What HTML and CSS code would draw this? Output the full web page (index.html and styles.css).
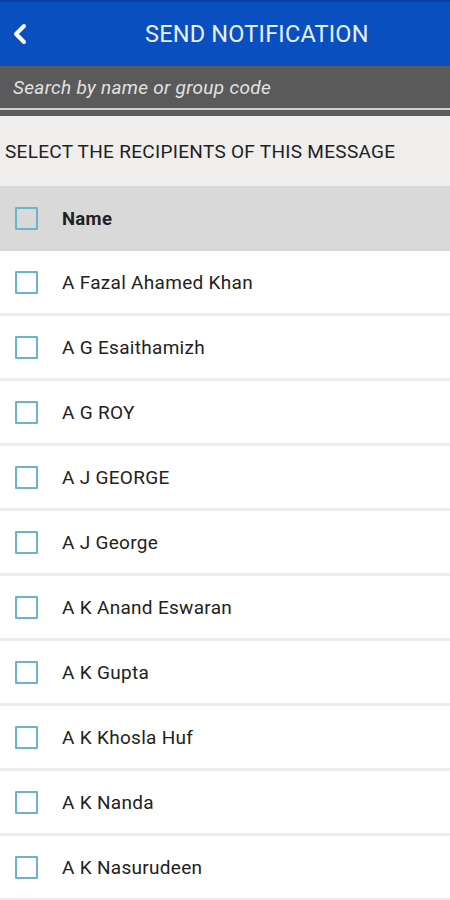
FILE: index.html
```html
<!DOCTYPE html>
<html lang="en">
<head>
    <meta charset="UTF-8">
    <meta name="viewport" content="width=device-width, initial-scale=1.0">
    <title>Send Notification</title>
    <link rel="stylesheet" href="styles.css">
</head>
<body>

    <!-- Top app bar -->
    <header class="topbar">
        <svg class="back" width="20" height="24" viewBox="0 0 20 24" aria-label="Back">
            <path d="M14 4 L6 12 L14 20" fill="none" stroke="#ffffff" stroke-width="4" stroke-linecap="round" stroke-linejoin="round"/>
        </svg>
        <h1>SEND NOTIFICATION</h1>
    </header>

    <!-- Search field -->
    <div class="search">
        <span class="placeholder">Search by name or group code</span>
    </div>
    <div class="search-edge"></div>

    <!-- Caption -->
    <div class="caption">SELECT THE RECIPIENTS OF THIS MESSAGE</div>

    <!-- Recipient list -->
    <div class="list-head">
        <span class="box"></span>
        <span class="head-label">Name</span>
    </div>
    <ul class="recipients">
        <li><span class="box"></span>A Fazal Ahamed Khan</li>
        <li><span class="box"></span>A G Esaithamizh</li>
        <li><span class="box"></span>A G ROY</li>
        <li><span class="box"></span>A J GEORGE</li>
        <li><span class="box"></span>A J George</li>
        <li><span class="box"></span>A K Anand Eswaran</li>
        <li><span class="box"></span>A K Gupta</li>
        <li><span class="box"></span>A K Khosla Huf</li>
        <li><span class="box"></span>A K Nanda</li>
        <li><span class="box"></span>A K Nasurudeen</li>
    </ul>

</body>
</html>
```

FILE: styles.css
```css
/* Page basics */
html, body {
    margin: 0;
    padding: 0;
    background-color: #ffffff;
    font-family: Roboto, "Noto Sans", Arial, sans-serif;
    overflow: hidden;
}

/* Blue app bar */
.topbar {
    height: 64px;
    background-color: #0a4fbf;
    border-top: 2px solid #0842a6;
    display: flex;
    align-items: center;
    padding-left: 10px;
}

.back {
    flex-shrink: 0;
}

.topbar h1 {
    margin: 0;
    padding-left: 115px;
    font-size: 23.5px;
    font-weight: 400;
    color: #e8f0ff;
    letter-spacing: 0.2px;
}

/* Search bar */
.search {
    height: 42px;
    background-color: #5a5a5a;
    display: flex;
    align-items: center;
    padding-left: 13px;
}

.placeholder {
    font-size: 19px;
    font-style: italic;
    color: #e2e2e2;
    letter-spacing: 0.3px;
}

.search-edge {
    height: 6px;
    background-color: #5c5c5c;
    border-top: 2px solid #d0d0d0;
}

/* Caption */
.caption {
    height: 70px;
    background-color: #efeeec;
    display: flex;
    align-items: center;
    padding-left: 5px;
    font-size: 19px;
    letter-spacing: 0.3px;
    color: #222222;
}

/* Header row */
.list-head {
    height: 65px;
    background-color: #d9d9d9;
    display: flex;
    align-items: center;
    padding-left: 15px;
}

.head-label {
    font-size: 18.5px;
    font-weight: 700;
    letter-spacing: 0.3px;
    color: #222222;
}

/* Checkbox */
.box {
    width: 19px;
    height: 19px;
    border: 2px solid #6cb4cc;
    border-radius: 1px;
    margin-right: 24px;
    flex-shrink: 0;
}

/* Rows */
.recipients {
    list-style: none;
    margin: 0;
    padding: 0;
}

.recipients li {
    height: 62px;
    border-bottom: 3px solid #ececec;
    display: flex;
    align-items: center;
    padding-left: 15px;
    font-size: 19px;
    letter-spacing: 0.3px;
    color: #222222;
}
```
